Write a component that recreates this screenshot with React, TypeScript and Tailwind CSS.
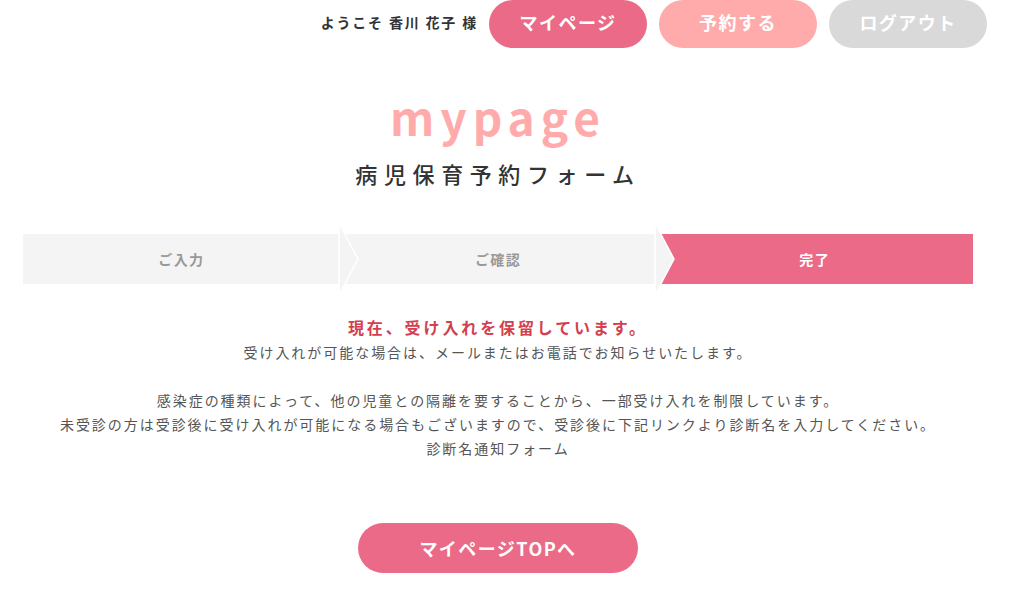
import React from 'react';

const font = { fontFamily: '"Noto Sans CJK JP", "Noto Sans", sans-serif' };

function StepArrow() {
  return (
    <svg
      className="absolute right-[-20px] top-[-11px] z-10"
      width="22"
      height="72"
      viewBox="0 0 22 72"
    >
      <polygon points="1,0 20,36 1,72" fill="#f4f4f4" stroke="#ffffff" strokeWidth="1.5" />
    </svg>
  );
}

function Step({ label, active, arrow }: { label: string; active?: boolean; arrow?: boolean }) {
  return (
    <div
      className={
        active
          ? 'relative flex h-[50px] flex-1 items-center justify-center bg-[#eb6a87] text-[14px] font-bold tracking-[0.1em] text-white'
          : 'relative flex h-[50px] flex-1 items-center justify-center bg-[#f4f4f4] text-[14px] font-bold tracking-[0.1em] text-[#999999]'
      }
    >
      {label}
      {arrow && <StepArrow />}
    </div>
  );
}

export default function App() {
  return (
    <div className="w-[996px] bg-white pb-[30px]" style={font}>
      <header className="flex items-center justify-end gap-[12px] pr-[9px]">
        <div className="mr-[-1px] pb-[3px] text-[14px] font-bold tracking-[0.13em] text-[#333333]">
          ようこそ 香川 花子 様
        </div>
        <a className="flex h-[48px] w-[158px] items-center justify-center rounded-full bg-[#eb6a87] pb-[3px] text-[18px] font-bold tracking-[0.08em] text-white">
          マイページ
        </a>
        <a className="flex h-[48px] w-[158px] items-center justify-center rounded-full bg-[#ffabab] pb-[3px] text-[18px] font-bold tracking-[0.08em] text-white">
          予約する
        </a>
        <a className="flex h-[48px] w-[158px] items-center justify-center rounded-full bg-[#d9d9d9] pb-[3px] text-[18px] font-bold tracking-[0.08em] text-white">
          ログアウト
        </a>
      </header>

      <div className="mt-[38px] flex flex-col items-center">
        <h1 className="text-[46px] font-bold leading-[60px] tracking-[0.13em] text-[#ffabab]">mypage</h1>
        <h2 className="mt-[12px] text-[22px] font-medium leading-[30px] tracking-[0.3em] text-[#333333]">
          病児保育予約フォーム
        </h2>
      </div>

      <div className="mx-[23px] mt-[46px] flex">
        <Step label="ご入力" arrow />
        <Step label="ご確認" arrow />
        <Step label="完了" active />
      </div>

      <div className="mt-[30px] text-center">
        <p className="text-[16px] font-bold leading-[26px] tracking-[0.18em] text-[#d43f4f]">
          現在、受け入れを保留しています。
        </p>
        <p className="text-[14px] leading-[24px] tracking-[0.14em] text-[#555555]">
          受け入れが可能な場合は、メールまたはお電話でお知らせいたします。
          <br />
          <br />
          感染症の種類によって、他の児童との隔離を要することから、一部受け入れを制限しています。
          <br />
          未受診の方は受診後に受け入れが可能になる場合もございますので、受診後に下記リンクより診断名を入力してください。
          <br />
          診断名通知フォーム
        </p>
      </div>

      <div className="mt-[63px] flex justify-center">
        <a className="flex h-[50px] w-[280px] items-center justify-center rounded-full bg-[#eb6a87] text-[18px] font-bold tracking-[0.08em] text-white">
          マイページTOPへ
        </a>
      </div>
    </div>
  );
}
